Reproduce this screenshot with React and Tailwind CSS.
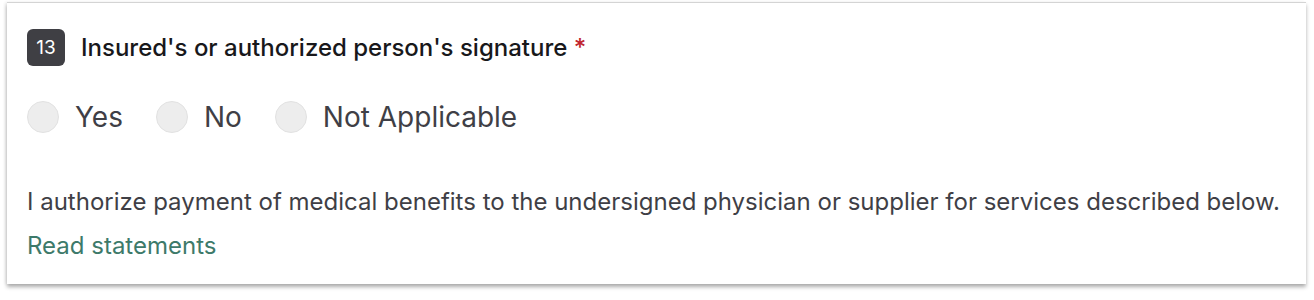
import { useState } from 'react';

const options = ['Yes', 'No', 'Not Applicable'];

export default function App() {
  const [value, setValue] = useState(null);

  return (
    <div className="bg-white h-[300px] pt-[2px] pl-[7px] pr-[8px] font-['Inter','Noto_Sans',sans-serif]">
      <div className="bg-white border-t border-[#d4d4d4] shadow-[0_3px_4px_rgba(0,0,0,0.32),-2px_0_3px_rgba(0,0,0,0.06)] h-[282px] px-[20px] pt-[26px]">
        <div className="flex items-center gap-[16px]">
          <span className="w-[38px] h-[37px] rounded-[6px] bg-[#3f3f44] text-white text-[19px] leading-none flex items-center justify-center">13</span>
          <span className="text-[24px] leading-[30px] font-medium text-[#18181b]">
            Insured's or authorized person's signature <span className="text-[#c0262d]">*</span>
          </span>
        </div>

        <div className="flex items-center mt-[34px] h-[34px]">
          {options.map((opt) => (
            <label key={opt} className="flex items-center mr-[33px] cursor-pointer" onClick={() => setValue(opt)}>
              <span className="w-[32px] h-[32px] rounded-full bg-[#ededed] border border-[#e2e2e2] flex items-center justify-center">
                {value === opt && <span className="w-[12px] h-[12px] rounded-full bg-[#3d7a6a]" />}
              </span>
              <span className="ml-[16px] text-[28px] leading-[34px] text-[#3f3f46]">{opt}</span>
            </label>
          ))}
        </div>

        <p className="mt-[53px] text-[24px] leading-[30px] text-[#3f3f46]">
          I authorize payment of medical benefits to the undersigned physician or supplier for services described below.
        </p>

        <a href="#" className="block mt-[14px] text-[24px] leading-[30px] text-[#3d7a6a]">Read statements</a>
      </div>
    </div>
  );
}
